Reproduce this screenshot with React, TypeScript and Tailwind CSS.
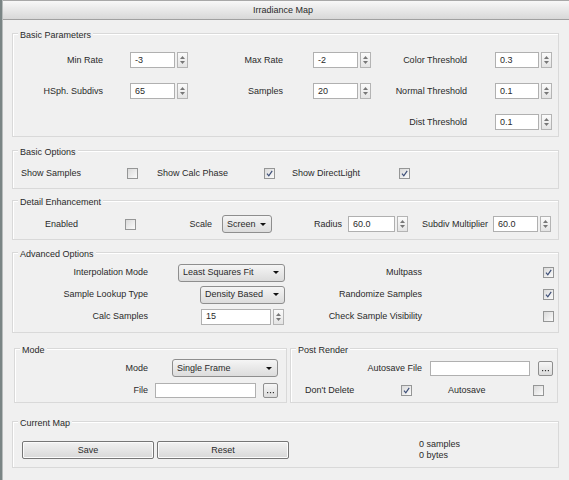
import React from "react";

function SpinBtn() {
  return (
    <div className="w-[11px] h-[16px] border border-[#b4b4b4] bg-linear-to-b from-[#fbfbfb] to-[#e4e4e4] flex flex-col items-center justify-center gap-[2px]">
      <svg width="5" height="3" viewBox="0 0 5 3"><path d="M0 3 L2.5 0 L5 3Z" fill="#777" /></svg>
      <svg width="5" height="3" viewBox="0 0 5 3"><path d="M0 0 L5 0 L2.5 3Z" fill="#777" /></svg>
    </div>
  );
}

function Spin({ v, w }: { v: string; w: string }) {
  return (
    <div className="flex items-center gap-[2px]">
      <div className={`${w} h-[16px] border border-[#b0b0b0] bg-white flex items-center pl-[4px]`}>{v}</div>
      <SpinBtn />
    </div>
  );
}

function Check({ on }: { on?: boolean }) {
  return (
    <div className="w-[11px] h-[11px] shrink-0 border border-[#959696] bg-linear-to-br from-[#dadada] to-[#fbfbfb] flex items-center justify-center">
      {on && (
        <svg width="7" height="7" viewBox="0 0 7 7">
          <path d="M1 3.6 L2.8 5.8 L6.2 0.8" stroke="#3d4f78" strokeWidth="1.2" fill="none" />
        </svg>
      )}
    </div>
  );
}

function Drop({ text, w }: { text: string; w: string }) {
  return (
    <div className={`${w} h-[18px] border border-[#8e8e8e] rounded-[3px] bg-linear-to-b from-[#f5f5f5] to-[#dcdcdc] flex items-center justify-between pl-[4px] pr-[5px]`}>
      <span>{text}</span>
      <svg width="6" height="3" viewBox="0 0 6 3"><path d="M0 0 H6 L3 3Z" fill="#111" /></svg>
    </div>
  );
}

function Dots() {
  return (
    <div className="w-[15px] h-[15px] border border-[#8e8e8e] rounded-[2px] bg-linear-to-b from-[#f6f6f6] to-[#dcdcdc] flex items-end justify-center pb-[3px]">
      <svg width="7" height="2" viewBox="0 0 7 2">
        <rect x="0" y="0" width="1.2" height="1.2" fill="#333" />
        <rect x="2.9" y="0" width="1.2" height="1.2" fill="#333" />
        <rect x="5.8" y="0" width="1.2" height="1.2" fill="#333" />
      </svg>
    </div>
  );
}

function Group({ title, className, children }: { title: string; className: string; children?: React.ReactNode }) {
  return (
    <div className={`border border-[#d9d9d9] shadow-[inset_1px_1px_0_#ffffff] ${className}`}>
      <div className="-mt-[4px] ml-[5px] px-[2px] bg-[#f0f0f0] w-fit leading-[11px]">{title}</div>
      {children}
    </div>
  );
}

function Btn({ text }: { text: string }) {
  return (
    <div className="w-[132px] h-[18px] border border-[#767676] rounded-[2px] bg-linear-to-b from-[#f2f2f2] to-[#d8d8d8] flex items-center justify-center shadow-[inset_0_0_0_1px_#fbfbfb]">
      {text}
    </div>
  );
}

export default function App() {
  return (
    <div className="w-[569px] h-[480px] flex bg-[#f0f0f0] text-[9px] leading-[11px] text-[#2a2a2a] font-['Liberation_Sans',Arial,sans-serif] overflow-hidden">
      <div className="w-[3px] h-full bg-[#7a8585] border-r border-[#b8bcbc]" />
      <div className="flex-1 flex flex-col">
        <div className="h-[20px] border-t border-[#a8a8a8] border-b border-b-[#a0a0a0] bg-linear-to-b from-[#f8f8f8] to-[#d8d8d8] flex items-center justify-center pr-[6px]">
          Irradiance Map
        </div>
        <div className="flex flex-col pl-[9px]">
          {/* Basic Parameters */}
          <Group title="Basic Parameters" className="mt-[13px] w-[547px] h-[104px]">
            <div className="mt-[11px] flex flex-col gap-[15px]">
              <div className="flex items-center h-[16px]">
                <div className="w-[90px] text-right">Min Rate</div>
                <div className="ml-[27px]"><Spin v="-3" w="w-[45px]" /></div>
                <div className="w-[95px] text-right">Max Rate</div>
                <div className="ml-[30px]"><Spin v="-2" w="w-[45px]" /></div>
                <div className="w-[96px] text-right">Color Threshold</div>
                <div className="ml-[28px]"><Spin v="0.3" w="w-[44px]" /></div>
              </div>
              <div className="flex items-center h-[16px]">
                <div className="w-[90px] text-right">HSph. Subdivs</div>
                <div className="ml-[27px]"><Spin v="65" w="w-[45px]" /></div>
                <div className="w-[95px] text-right">Samples</div>
                <div className="ml-[30px]"><Spin v="20" w="w-[45px]" /></div>
                <div className="w-[96px] text-right">Normal Threshold</div>
                <div className="ml-[28px]"><Spin v="0.1" w="w-[44px]" /></div>
              </div>
              <div className="flex items-center h-[16px]">
                <div className="w-[358px]" />
                <div className="w-[96px] text-right">Dist Threshold</div>
                <div className="ml-[28px]"><Spin v="0.1" w="w-[44px]" /></div>
              </div>
            </div>
          </Group>

          {/* Basic Options */}
          <Group title="Basic Options" className="mt-[13px] w-[547px] h-[39px]">
            <div className="mt-[8px] h-[14px] flex items-center pl-[8px]">
              <div className="w-[106px]">Show Samples</div>
              <Check />
              <div className="ml-[19px] w-[107px]">Show Calc Phase</div>
              <Check on />
              <div className="ml-[17px] w-[107px]">Show DirectLight</div>
              <Check on />
            </div>
          </Group>

          {/* Detail Enhancement */}
          <Group title="Detail Enhancement" className="mt-[11px] w-[547px] h-[40px]">
            <div className="mt-[7px] h-[18px] flex items-center">
              <div className="w-[32px]" />
              <div className="w-[80px]">Enabled</div>
              <Check />
              <div className="w-[86px] text-right pr-[10px]">Scale</div>
              <Drop text="Screen" w="w-[50px]" />
              <div className="w-[76px] text-right pr-[6px]">Radius</div>
              <Spin v="60.0" w="w-[47px]" />
              <div className="w-[85px] text-right pr-[5px]">Subdiv Multiplier</div>
              <Spin v="60.0" w="w-[45px]" />
            </div>
          </Group>

          {/* Advanced Options */}
          <Group title="Advanced Options" className="mt-[12px] w-[547px] h-[81px]">
            <div className="mt-[3px] flex flex-col gap-[3px]">
              <div className="h-[19px] flex items-center">
                <div className="w-[135px] text-right">Interpolation Mode</div>
                <div className="w-[137px] flex justify-end"><Drop text="Least Squares Fit" w="w-[107px]" /></div>
                <div className="w-[137px] text-right">Multpass</div>
                <div className="ml-[121px]"><Check on /></div>
              </div>
              <div className="h-[19px] flex items-center">
                <div className="w-[135px] text-right">Sample Lookup Type</div>
                <div className="w-[137px] flex justify-end"><Drop text="Density Based" w="w-[85px]" /></div>
                <div className="w-[137px] text-right">Randomize Samples</div>
                <div className="ml-[121px]"><Check on /></div>
              </div>
              <div className="h-[19px] flex items-center">
                <div className="w-[135px] text-right">Calc Samples</div>
                <div className="w-[136px] flex justify-end"><Spin v="15" w="w-[70px]" /></div>
                <div className="w-[138px] text-right">Check Sample Visibility</div>
                <div className="ml-[121px]"><Check /></div>
              </div>
            </div>
          </Group>

          {/* Mode + Post Render */}
          <div className="mt-[15px] flex gap-[3px]">
            <Group title="Mode" className="ml-[2px] w-[273px] h-[55px]">
              <div className="mt-[3px] flex flex-col gap-[4px]">
                <div className="h-[18px] flex items-center">
                  <div className="w-[133px] text-right">Mode</div>
                  <div className="ml-[24px]"><Drop text="Single Frame" w="w-[106px]" /></div>
                </div>
                <div className="h-[18px] flex items-center">
                  <div className="w-[133px] text-right">File</div>
                  <div className="ml-[7px] w-[101px] h-[15px] border border-[#b0b0b0] bg-white" />
                  <div className="ml-[7px]"><Dots /></div>
                </div>
              </div>
            </Group>
            <Group title="Post Render" className="w-[268px] h-[55px]">
              <div className="mt-[3px] flex flex-col gap-[4px]">
                <div className="h-[18px] flex items-center">
                  <div className="w-[131px] text-right">Autosave File</div>
                  <div className="ml-[8px] w-[100px] h-[15px] border border-[#b0b0b0] bg-white" />
                  <div className="ml-[8px]"><Dots /></div>
                </div>
                <div className="h-[18px] flex items-center">
                  <div className="ml-[14px] w-[96px]">Don&apos;t Delete</div>
                  <Check on />
                  <div className="w-[121px] pl-[36px]">Autosave</div>
                  <Check />
                </div>
              </div>
            </Group>
          </div>

          {/* Current Map */}
          <Group title="Current Map" className="mt-[18px] w-[547px] h-[47px]">
            <div className="mt-[10px] flex items-center pl-[9px] gap-[3px]">
              <Btn text="Save" />
              <Btn text="Reset" />
              <div className="ml-[127px] flex flex-col">
                <div>0 samples</div>
                <div>0 bytes</div>
              </div>
            </div>
          </Group>
        </div>
      </div>
    </div>
  );
}
